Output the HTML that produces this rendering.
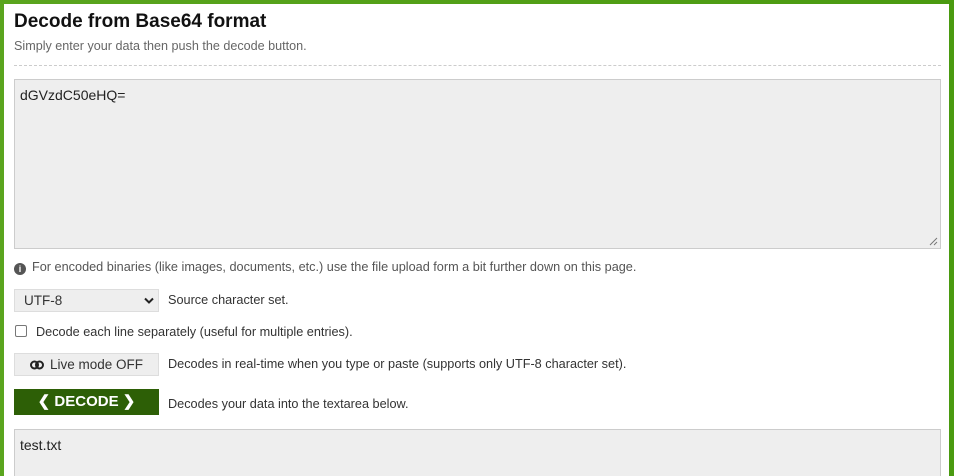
<!DOCTYPE html>
<html style="overflow:hidden;width:954px;height:476px"><head><meta charset="utf-8"><style>
*{box-sizing:border-box;margin:0;padding:0}
body{width:954px;height:476px;overflow:hidden;background:linear-gradient(90deg,#5aa51e,#4a9a10);font-family:"Liberation Sans",Arial,sans-serif;position:relative}
.panel{position:absolute;left:4px;top:4px;width:945px;height:472px;background:#fff}
.abs{position:absolute}
h1{position:absolute;left:14px;top:11px;font-size:19px;font-weight:bold;color:#111}
.sub{left:14px;top:39px;font-size:12.6px;color:#666}
.dash{left:14px;top:65px;width:927px;border-top:1px dashed #ccc}
.ta{left:14px;width:927px;background:#eee;border:1px solid #ccc;font-size:14px;color:#222;padding:7px 5px}
.t{font-size:12.7px;color:#333}
.btn{left:14px;width:145px;height:23px;background:#eee;border:1px solid #ddd;font-size:13.5px;color:#333}
</style></head><body>
<div class="panel"></div>
<h1>Decode from Base64 format</h1>
<div class="abs sub">Simply enter your data then push the decode button.</div>
<div class="abs dash"></div>
<div class="abs ta" style="top:79px;height:170px">dGVzdC50eHQ=
<svg class="abs" style="right:2px;bottom:2px" width="9" height="9"><path d="M8 1L1 8M8 5L5 8" stroke="#777" stroke-width="1"/></svg></div>
<div class="abs t" style="left:14px;top:260px;color:#555"><span style="display:inline-block;width:12px;height:12px;border-radius:50%;background:#555;color:#fff;font-size:9px;font-weight:bold;text-align:center;line-height:12px;vertical-align:-1px;margin-right:6px">i</span>For encoded binaries (like images, documents, etc.) use the file upload form a bit further down on this page.</div>
<div class="abs btn" style="top:289px;padding:3px 9px">UTF-8<svg class="abs" style="right:4px;top:7px" width="10" height="8"><path d="M1 1.5L5 5.5L9 1.5" stroke="#222" stroke-width="2" fill="none"/></svg></div>
<div class="abs t" style="left:168px;top:293px">Source character set.</div>
<div class="abs" style="left:15px;top:325px;width:12px;height:12px;border:1px solid #777;border-radius:2px;background:#fff"></div>
<div class="abs t" style="left:36px;top:325px">Decode each line separately (useful for multiple entries).</div>
<div class="abs btn" style="top:353px;text-align:center;line-height:21px"><svg width="14" height="10" style="vertical-align:-1px;margin-right:6px"><circle cx="4.5" cy="5" r="3.5" stroke="#222" stroke-width="2" fill="none"/><circle cx="9.5" cy="5" r="3.5" stroke="#222" stroke-width="2" fill="none"/></svg>Live mode OFF</div>
<div class="abs t" style="left:168px;top:357px">Decodes in real-time when you type or paste (supports only UTF-8 character set).</div>
<div class="abs" style="left:14px;top:389px;width:145px;height:26px;background:#2d5f06;color:#fff;font-weight:bold;font-size:15px;text-align:center;line-height:26px">&#10094; DECODE &#10095;</div>
<div class="abs t" style="left:168px;top:397px">Decodes your data into the textarea below.</div>
<div class="abs ta" style="top:429px;height:60px">test.txt</div>
</body></html>
